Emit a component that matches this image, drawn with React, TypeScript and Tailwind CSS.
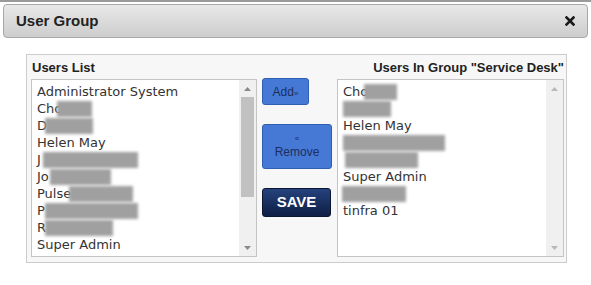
import React from "react";

type Item = { text: string; blurLeft?: number; blurWidth?: number };

// names after the prefix are redacted in the reference, drawn as blurred bars
const usersList: Item[] = [
  { text: "Administrator System" },
  { text: "Cho", blurLeft: 20, blurWidth: 35 },
  { text: "D", blurLeft: 8, blurWidth: 48 },
  { text: "Helen May" },
  { text: "J", blurLeft: 6, blurWidth: 95 },
  { text: "Jo", blurLeft: 13, blurWidth: 61 },
  { text: "Pulse", blurLeft: 32, blurWidth: 64 },
  { text: "P", blurLeft: 8, blurWidth: 93 },
  { text: "R", blurLeft: 8, blurWidth: 68 },
  { text: "Super Admin" },
];

const groupUsers: Item[] = [
  { text: "Cho", blurLeft: 21, blurWidth: 33 },
  { text: "", blurLeft: 0, blurWidth: 48 },
  { text: "Helen May" },
  { text: "", blurLeft: 0, blurWidth: 102 },
  { text: "", blurLeft: 2, blurWidth: 73 },
  { text: "Super Admin" },
  { text: "", blurLeft: -1, blurWidth: 64 },
  { text: "tinfra 01" },
];

function Row({ item }: { item: Item }) {
  return (
    <div className="relative h-[17px] leading-[17px] whitespace-nowrap">
      <span>{item.text}</span>
      {item.blurWidth !== undefined && (
        <span
          className="absolute top-[1px] h-[16px] bg-[#a0a0a0] blur-[1.5px]"
          style={{ left: item.blurLeft, width: item.blurWidth }}
        />
      )}
    </div>
  );
}

function ListBox({ items, enabled }: { items: Item[]; enabled: boolean }) {
  const arrow = enabled ? "#8a8a8a" : "#b8b8b8";
  return (
    <div className="flex h-[178px] border border-[#c4c4c4] bg-white overflow-hidden">
      <div className="flex-1 min-w-0 pl-[5px] pt-[3px] text-[13px] text-[#333] font-['DejaVu_Sans',sans-serif] overflow-hidden">
        {items.map((item, i) => (
          <Row key={i} item={item} />
        ))}
      </div>
      <div className="w-[17px] shrink-0 flex flex-col bg-[#f0f0f0]">
        <div className="h-[17px] flex items-center justify-center">
          <svg width="7" height="4" viewBox="0 0 7 4">
            <polygon points="0,4 3.5,0 7,4" fill={arrow} />
          </svg>
        </div>
        <div className="flex-1 px-[2px]">
          {enabled && <div className="h-[100px] bg-[#c1c1c1]" />}
        </div>
        <div className="h-[17px] flex items-center justify-center">
          <svg width="7" height="4" viewBox="0 0 7 4">
            <polygon points="0,0 7,0 3.5,4" fill={arrow} />
          </svg>
        </div>
      </div>
    </div>
  );
}

export default function App() {
  return (
    <div className="w-[591px] h-[285px] bg-white border-t-2 border-[#9a9a9a] font-['Liberation_Sans',Arial,sans-serif] overflow-hidden">
      <div className="mx-[3px] mt-[2px] h-[34px] flex items-center justify-between pl-[12px] pr-[12px] rounded-[4px] border border-[#a8a8a8] bg-gradient-to-b from-[#e8e8e8] to-[#cdcdcd]">
        <span className="text-[15px] font-bold text-[#222]">User Group</span>
        <svg width="10" height="10" viewBox="0 0 10 10">
          <path d="M1.5 1.5 L8.5 8.5 M8.5 1.5 L1.5 8.5" stroke="#1a1a1a" strokeWidth="2.6" strokeLinecap="square" />
        </svg>
      </div>

      <div className="ml-[26px] mt-[16px] w-[541px] flex border border-[#cccccc] bg-[#f7f7f7] pl-[4px] pr-[1px] pt-[6px] pb-[5px]">
        <div className="w-[226px] flex flex-col">
          <div className="h-[18px] pl-[1px] text-[13px] leading-[14px] font-bold text-[#222]">Users List</div>
          <ListBox items={usersList} enabled />
        </div>

        <div className="w-[70px] ml-[5px] flex flex-col items-start pt-[17px]">
          <button className="w-[47px] h-[27px] rounded-[3px] border border-[#2f5fb3] bg-[#4679d6] text-[12px] text-[#1b2f5e]">
            Add<span className="text-[8px]">»</span>
          </button>
          <button className="mt-[19px] w-[70px] h-[45px] rounded-[3px] border border-[#2f5fb3] bg-[#4679d6] text-[12px] leading-[15px] text-[#1b2f5e] flex flex-col items-center justify-center">
            <span className="text-[8px] leading-[12px]">«</span>
            <span>Remove</span>
          </button>
          <button className="mt-[19px] w-[69px] h-[29px] rounded-[3px] border border-[#0b1633] bg-gradient-to-b from-[#25427d] to-[#0f1f45] text-[15px] font-bold text-white">
            SAVE
          </button>
        </div>

        <div className="w-[227px] ml-[5px] flex flex-col">
          <div className="h-[18px] text-right text-[13px] leading-[14px] font-bold text-[#222] whitespace-nowrap">
            Users In Group "Service Desk"
          </div>
          <ListBox items={groupUsers} enabled={false} />
        </div>
      </div>
    </div>
  );
}
